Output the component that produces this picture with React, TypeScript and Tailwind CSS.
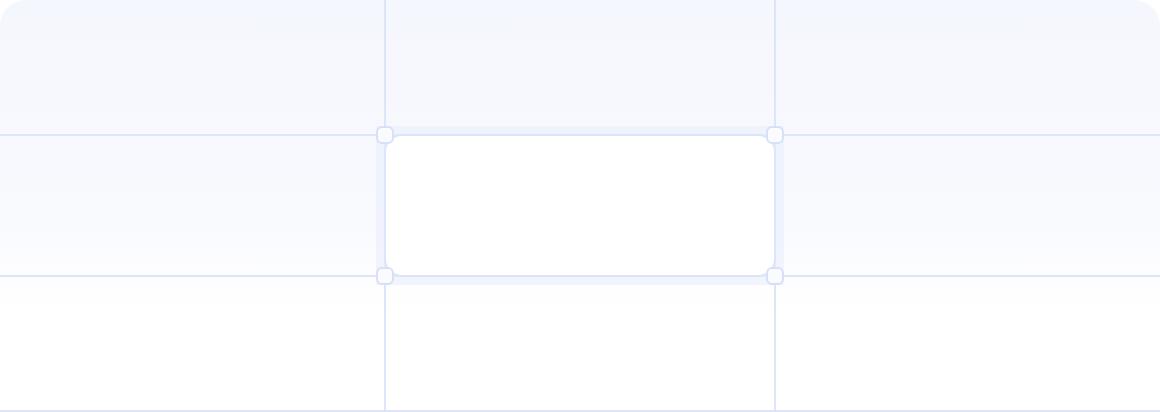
export default function App() {
  const cell = "border-[#dce5f9]";
  const handle = "absolute w-[18px] h-[18px] rounded-[6px] border-2 border-[#d6e0f8] bg-[#fafbff]";
  return (
    <div className="w-[1160px] h-[412px] bg-white">
      <div className="relative w-full h-full rounded-t-[26px] overflow-hidden bg-gradient-to-b from-[#f5f7fe] via-[#f9fafe] via-55% to-white to-75% grid grid-cols-[386px_390px_384px] grid-rows-[136px_141px_135px]">
        <div className={`border-r-2 border-b-2 ${cell}`} />
        <div className={`border-r-2 border-b-2 ${cell}`} />
        <div className={`border-b-2 ${cell}`} />
        <div className={`border-r-2 border-b-2 ${cell}`} />
        <div className={`border-r-2 border-b-2 ${cell} relative`}>
          {/* selected cell overlay */}
          <div className="absolute -left-[10px] -top-[10px] -right-[10px] -bottom-[10px] bg-[#e9eefb]/60" />
          <div className="absolute -left-[2px] -top-[2px] -right-[2px] -bottom-[2px] rounded-[18px] border-2 border-[#dce5f9] bg-white" />
          <div className={`${handle} -left-[10px] -top-[10px]`} />
          <div className={`${handle} -right-[10px] -top-[10px]`} />
          <div className={`${handle} -left-[10px] -bottom-[10px]`} />
          <div className={`${handle} -right-[10px] -bottom-[10px]`} />
        </div>
        <div className={`border-b-2 ${cell}`} />
        <div className={`border-r-2 border-b-2 ${cell}`} />
        <div className={`border-r-2 border-b-2 ${cell}`} />
        <div className={`border-b-2 ${cell}`} />
      </div>
    </div>
  );
}
